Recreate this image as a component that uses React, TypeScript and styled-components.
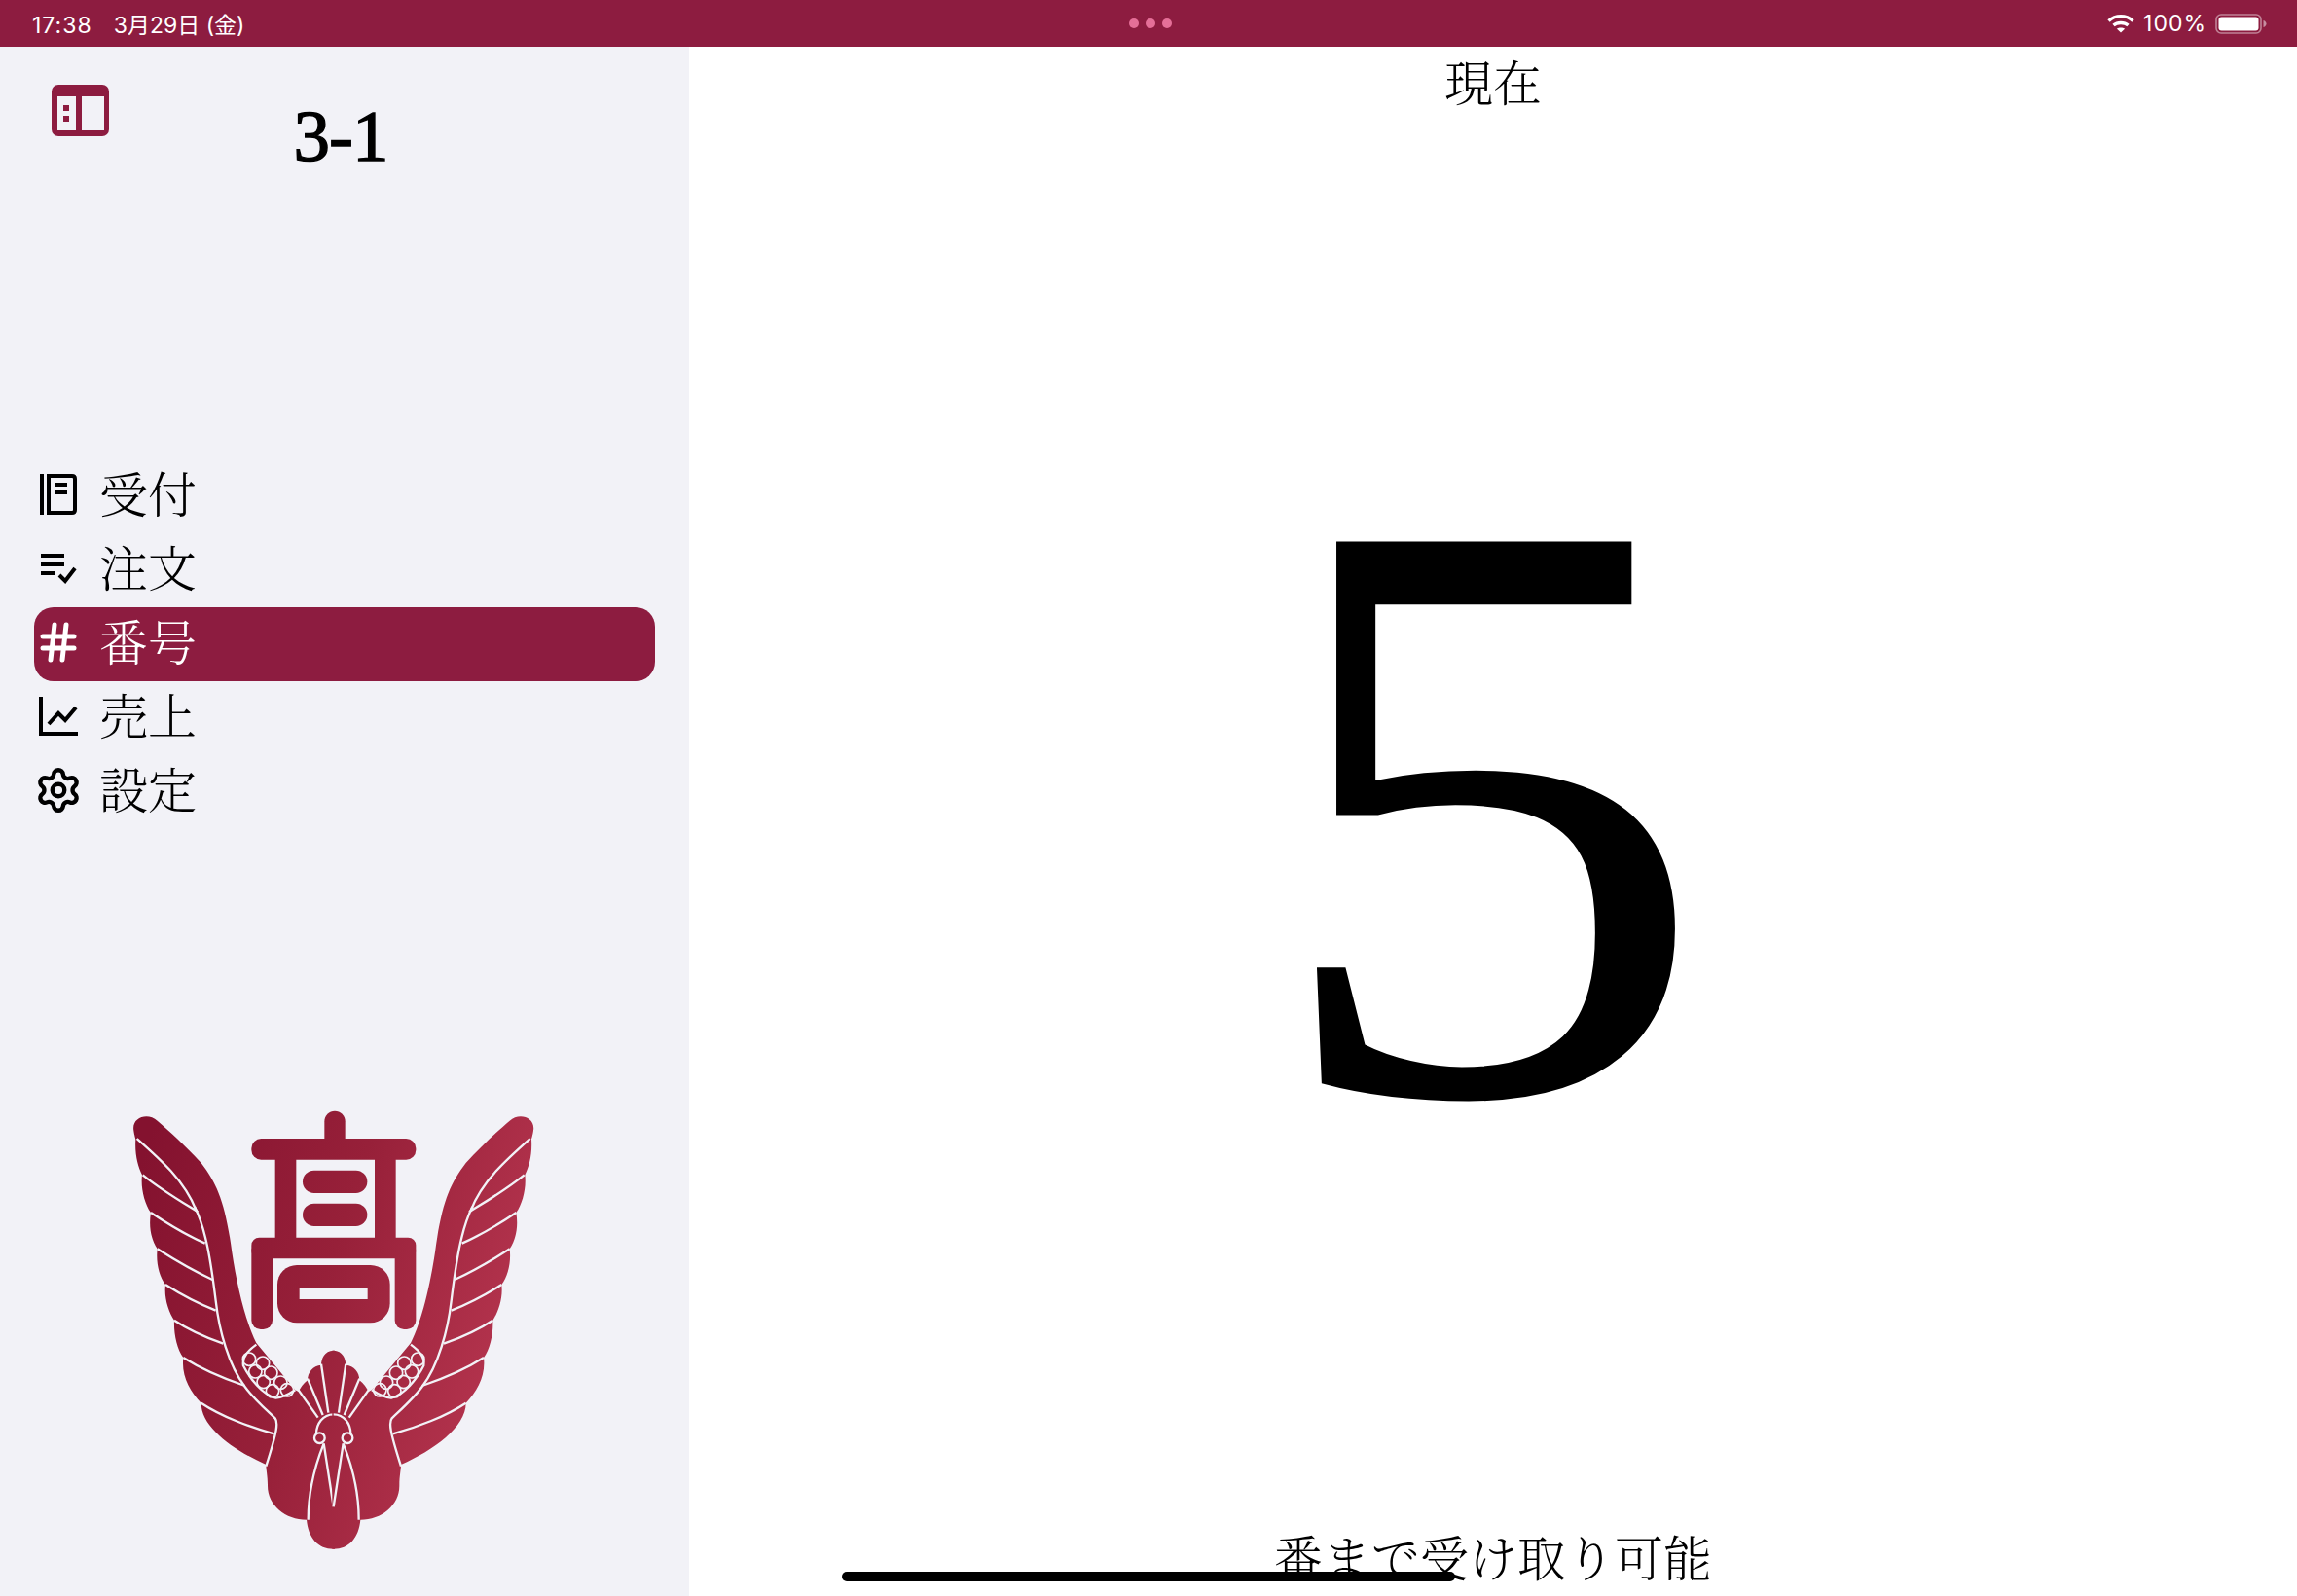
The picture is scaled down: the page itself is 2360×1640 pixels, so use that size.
import styled, { createGlobalStyle } from "styled-components";
import { Hash, Settings } from "lucide-react";

const crimson = "#8d1c40";
const cjk = `"Noto Sans CJK JP", sans-serif`;
const mincho = `"Liberation Serif", "Noto Serif CJK JP", "Noto Sans CJK JP", serif`;

const GlobalStyle = createGlobalStyle`
  html, body {
    margin: 0;
    padding: 0;
    background: #ffffff;
  }
`;

const Screen = styled.div`
  position: relative;
  width: 2360px;
  height: 1640px;
  overflow: hidden;
  display: flex;
  flex-direction: column;
`;

const StatusBar = styled.div`
  height: 48px;
  flex: none;
  background: ${crimson};
  color: #ffffff;
  display: grid;
  grid-template-columns: 1fr auto 1fr;
  align-items: center;
  padding: 0 30px 0 33px;
  font: 400 23px Inter, ${cjk};
`;

const StatusLeft = styled.div`
  display: flex;
  align-items: baseline;
  gap: 22px;
`;

const StatusTime = styled.span`
  letter-spacing: 1px;
`;

const StatusDots = styled.div`
  display: flex;
  gap: 7px;
`;

const Dot = styled.span`
  width: 10px;
  height: 10px;
  border-radius: 50%;
  background: #e56f98;
`;

const StatusRight = styled.div`
  display: flex;
  justify-content: flex-end;
  align-items: center;
  gap: 9px;
`;

const Body = styled.div`
  flex: 1;
  display: flex;
  min-height: 0;
`;

const Sidebar = styled.aside`
  width: 708px;
  flex: none;
  background: #f2f2f7;
  display: flex;
  flex-direction: column;
`;

const SidebarHeader = styled.div`
  height: 134px;
  padding: 39px 0 0 53px;
  box-sizing: border-box;
  position: relative;
`;

const SidebarTitle = styled.h1`
  position: absolute;
  left: 0;
  right: 8px;
  top: 47px;
  margin: 0;
  text-align: center;
  font: 400 75px/1.2 "Liberation Serif", serif;
  -webkit-text-stroke: 1.4px #000000;
  letter-spacing: -1px;
  color: #000000;
`;

const NavList = styled.nav`
  margin: 290px 35px 0;
  display: flex;
  flex-direction: column;
`;

const NavItem = styled.div<{ $active?: boolean }>`
  height: 76px;
  display: flex;
  align-items: center;
  gap: 22px;
  padding-left: 5px;
  border-radius: 20px;
  background: ${(p) => (p.$active ? crimson : "transparent")};
  color: ${(p) => (p.$active ? "#ffffff" : "#000000")};
  font: 300 50px/1 ${mincho};
`;

const NavIcon = styled.span`
  width: 40px;
  height: 44px;
  padding-bottom: 4px;
  display: flex;
  align-items: center;
  justify-content: center;

  svg {
    flex: none;
  }
`;

const LogoWrap = styled.div`
  margin-top: auto;
  padding: 0 0 20px 110px;
  line-height: 0;
`;

const Main = styled.main`
  flex: 1;
  display: flex;
  flex-direction: column;
  align-items: center;
  justify-content: space-between;
  background: #ffffff;
  color: #000000;
`;

const MainLabel = styled.div`
  font: 300 50px/78px ${mincho};
`;

const CurrentNumber = styled.div`
  font: 400 865px/1 "Liberation Serif", serif;
  transform: scaleX(1.056);
  margin: -30px 0 0 -12px;
`;

const MainFooter = styled.div`
  font: 300 50px/72px ${mincho};
  margin-bottom: 1px;
`;

const HomeIndicator = styled.div`
  position: absolute;
  left: 865px;
  bottom: 15px;
  width: 630px;
  height: 10px;
  border-radius: 5px;
  background: #000000;
`;

function WifiIcon() {
  return (
    <svg width="28" height="20" viewBox="0 0 28 20" fill="none" stroke="#fff" strokeWidth="3.4">
      <path d="M1.5 7.5C8.5 1 19.5 1 26.5 7.5" />
      <path d="M6.5 12C10.5 8.6 17.5 8.6 21.5 12" />
      <path d="M14 19.5L9.8 15.6C12 14 16 14 18.2 15.6Z" fill="#fff" stroke="none" />
    </svg>
  );
}

function BatteryIcon() {
  return (
    <svg width="54" height="24" viewBox="0 0 54 24" fill="none">
      <rect x="1" y="3" width="46" height="19" rx="5" stroke="#fff" strokeOpacity="0.45" strokeWidth="1.6" />
      <rect x="3.5" y="5.5" width="41" height="14" rx="3" fill="#fff" />
      <path d="M49.5 9C51.5 9.6 52.5 11 52.5 12.5S51.5 15.4 49.5 16Z" fill="#fff" fillOpacity="0.5" />
    </svg>
  );
}

function SidebarToggleIcon() {
  return (
    <svg width="59" height="53" viewBox="0 0 59 53">
      <rect x="0" y="0" width="59" height="53" rx="7" fill={crimson} />
      <rect x="6" y="12" width="19" height="35" fill="#f2f2f7" />
      <rect x="31" y="12" width="23" height="35" fill="#f2f2f7" />
      <rect x="12" y="21" width="6" height="6" fill={crimson} />
      <rect x="12" y="32" width="6" height="6" fill={crimson} />
    </svg>
  );
}

function BookIcon() {
  return (
    <svg width="38" height="42" viewBox="0 0 38 42" fill="none" stroke="#000" strokeWidth="4">
      <path d="M2 0V42" />
      <path d="M9 2H33C35 2 36 3 36 5V37C36 39 35 40 33 40H9Z" />
      <path d="M16 11H28M16 19H28" />
    </svg>
  );
}

function ListCheckIcon() {
  return (
    <svg width="38" height="32" viewBox="0 0 38 32" fill="none" stroke="#000" strokeWidth="4">
      <path d="M1 3H25M1 12H25M1 21H16" />
      <path d="M20 23L26 29L36 16" />
    </svg>
  );
}

function ChartIcon() {
  return (
    <svg width="40" height="40" viewBox="0 0 40 40" fill="none" stroke="#000" strokeWidth="4">
      <path d="M2 0V38H40" />
      <path d="M10 28L20 17L27 24L38 11" />
    </svg>
  );
}

const leftWing = `
  M702 803 L698 803 C670 803 660 830 660 848 C635 850 618 870 618 895 C605 905 595 920 590 930
  L580 925 L460 780 C425 710 400 600 385 500 C365 350 340 290 290 225
  C240 170 190 125 155 95 C125 68 75 85 82 125 C84 140 88 150 88 152
  C85 200 95 235 108 262 C103 300 115 350 135 378 C128 420 135 460 155 490
  C150 530 160 575 180 600 C175 640 190 685 207 710 C205 750 215 800 235 825
  C228 880 255 930 290 965 C290 1040 390 1110 490 1155 C490 1170 495 1190 495 1220
  C495 1280 550 1325 615 1325 C620 1380 650 1415 698 1415 L702 1415 Z`;

// feather and body lines, drawn for the left half and mirrored
const leftLines = [
  "M92 150C160 210 240 280 275 372",
  "M110 262C170 310 230 345 280 376",
  "M135 378C190 415 250 450 302 473",
  "M155 490C210 525 270 560 325 585",
  "M180 600C235 635 285 660 335 680",
  "M207 710C260 745 310 765 358 782",
  "M235 825C290 860 360 890 425 912",
  "M290 965C350 1005 440 1040 515 1060",
  "M270 360C305 430 320 530 335 650C345 740 375 850 425 915C450 950 490 985 518 1012C528 1025 525 1050 490 1160",
  "M590 925L650 1010",
  "M618 890L665 1002",
  "M660 845L682 995",
  "M668 1090C640 1160 620 1240 620 1325",
  "M668 1090L698 1285",
];

const scales = [
  [438, 830], [457, 868], [482, 900], [510, 928],
  [480, 842], [505, 872], [535, 902], [555, 925],
];

function SchoolLogo() {
  return (
    <svg width="460" height="500" viewBox="0 0 1380 1500">
      <defs>
        <linearGradient id="logoFill" gradientUnits="userSpaceOnUse" x1="80" y1="300" x2="1320" y2="700">
          <stop offset="0" stopColor="#84122f" />
          <stop offset="0.5" stopColor="#972039" />
          <stop offset="1" stopColor="#b6354f" />
        </linearGradient>
        <g id="logoHalf">
          <path d={leftWing} fill="#fff" />
          <g fill="none" stroke="#000" strokeWidth="7">
            {leftLines.map((d) => (
              <path key={d} d={d} />
            ))}
            <path d="M460 785C440 800 415 820 420 850C440 890 480 940 520 950C545 948 565 935 580 925" />
            <g strokeWidth="5">
              {scales.map(([cx, cy]) => (
                <circle key={`${cx}-${cy}`} cx={cx} cy={cy} r="20" />
              ))}
            </g>
            <path d="M698 1000C665 1000 645 1030 645 1060" />
            <circle cx="655" cy="1073" r="16" />
          </g>
        </g>
        <mask id="logoMask" maskUnits="userSpaceOnUse" x="0" y="0" width="1380" height="1500">
          <rect width="1380" height="1500" fill="#000" />
          <use href="#logoHalf" />
          <use href="#logoHalf" transform="matrix(-1 0 0 1 1396 0)" />
          <rect x="670" y="65" width="64" height="120" rx="32" fill="#fff" />
          <rect x="445" y="150" width="507" height="65" rx="30" fill="#fff" />
          <rect x="518" y="200" width="65" height="270" fill="#fff" />
          <rect x="825" y="200" width="65" height="270" fill="#fff" />
          <rect x="603" y="248" width="199" height="70" rx="35" fill="#fff" />
          <rect x="603" y="350" width="199" height="70" rx="35" fill="#fff" />
          <rect x="445" y="455" width="507" height="65" rx="24" fill="#fff" />
          <rect x="445" y="470" width="65" height="268" rx="28" fill="#fff" />
          <rect x="887" y="470" width="65" height="268" rx="28" fill="#fff" />
          <rect x="525" y="540" width="347" height="178" rx="60" fill="#fff" />
          <rect x="593" y="612" width="210" height="33" fill="#000" />
        </mask>
      </defs>
      <rect width="1380" height="1500" fill="url(#logoFill)" mask="url(#logoMask)" />
    </svg>
  );
}

const navItems = [
  { label: "受付", icon: <BookIcon /> },
  { label: "注文", icon: <ListCheckIcon /> },
  { label: "番号", icon: <Hash size={48} strokeWidth={2.5} />, active: true },
  { label: "売上", icon: <ChartIcon /> },
  { label: "設定", icon: <Settings size={50} strokeWidth={2.1} /> },
];

export default function App() {
  return (
    <Screen>
      <GlobalStyle />
      <StatusBar>
        <StatusLeft>
          <StatusTime>17:38</StatusTime>
          <span>3月29日 (金)</span>
        </StatusLeft>
        <StatusDots>
          <Dot />
          <Dot />
          <Dot />
        </StatusDots>
        <StatusRight>
          <WifiIcon />
          <StatusTime>100%</StatusTime>
          <BatteryIcon />
        </StatusRight>
      </StatusBar>
      <Body>
        <Sidebar>
          <SidebarHeader>
            <SidebarToggleIcon />
            <SidebarTitle>3-1</SidebarTitle>
          </SidebarHeader>
          <NavList>
            {navItems.map((item) => (
              <NavItem key={item.label} $active={item.active}>
                <NavIcon>{item.icon}</NavIcon>
                {item.label}
              </NavItem>
            ))}
          </NavList>
          <LogoWrap>
            <SchoolLogo />
          </LogoWrap>
        </Sidebar>
        <Main>
          <MainLabel>現在</MainLabel>
          <CurrentNumber>5</CurrentNumber>
          <MainFooter>番まで受け取り可能</MainFooter>
        </Main>
      </Body>
      <HomeIndicator />
    </Screen>
  );
}
